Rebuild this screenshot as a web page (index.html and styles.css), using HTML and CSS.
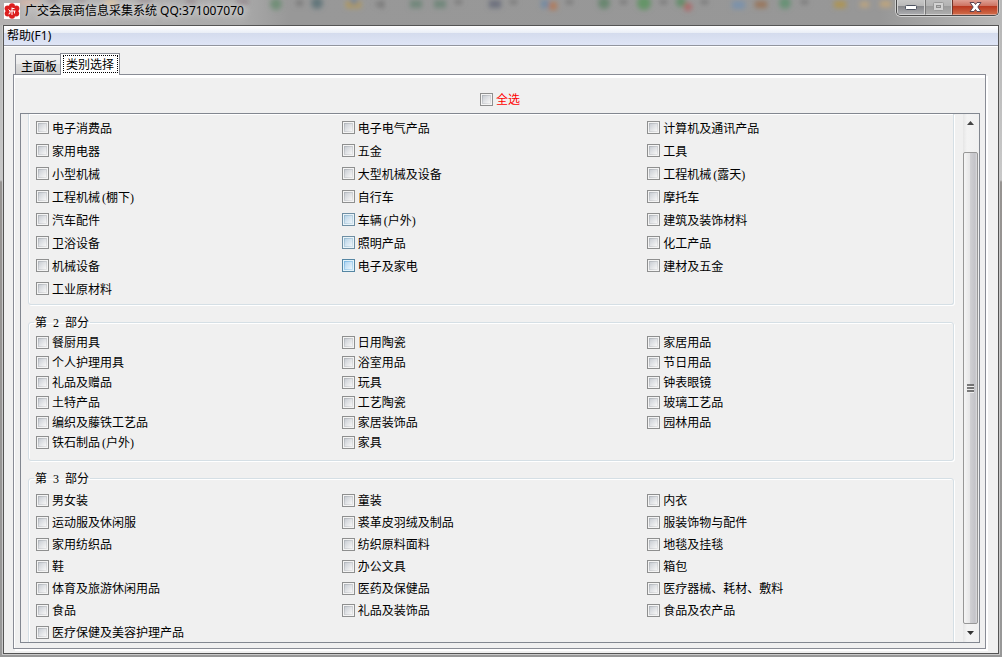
FILE: index.html
```html
<!DOCTYPE html>
<html lang="zh-CN">
<head>
<meta charset="utf-8">
<title>广交会展商信息采集系统</title>
<link rel="stylesheet" href="styles.css">
</head>
<body>
<div class="window">
  <header class="titlebar">
    <svg class="backdrop" width="1002" height="24" viewBox="0 0 1002 24" aria-hidden="true">
      <defs><filter id="soft" x="-50%" y="-50%" width="200%" height="200%"><feGaussianBlur stdDeviation="2.600"/></filter></defs>
      <g filter="url(#soft)">
        <path fill="#d8b2a0" d="M20 0h20v5h-20zM105 0h12v6h-12z"/>
        <path fill="#dcc294" d="M106 0h10v5h-10z"/>
        <path fill="#8a7a80" d="M48 0h10v3h-10zM76 0h9v3h-9zM138 0h14v3h-14zM186 0h10v4h-10zM236 0h12v4h-12z"/>
        <circle cx="276" cy="4" r="6" fill="#728f78"/><circle cx="317" cy="3" r="6" fill="#64777c"/>
        <path fill="#7d7d7d" d="M296 0h7v6h-7z"/>
        <path fill="#b29a5c" d="M346 1h15v7h-15z"/><circle cx="354" cy="1" r="4" fill="#7a8793"/>
        <path fill="#777" d="M374 4l10-4v9zM455 0h7v4h-7zM510 0h7v4h-7zM566 0h7v4h-7zM620 0h7v4h-7zM660 0h7v4h-7zM701 0h7v4h-7zM801 0h7v4h-7z"/>
        <path fill="#71877a" d="M410 0h12v8h-12zM434 0h12v8h-12z"/>
        <path fill="#6d717e" d="M489 0h12v8h-12z"/>
        <path fill="#748ba3" d="M541 0h8v8h-8z"/><path fill="#b07d5d" d="M549 2h8v8h-8z"/>
        <circle cx="604" cy="3" r="6" fill="#69866f"/><circle cx="644" cy="3" r="7" fill="#659467"/>
        <circle cx="681" cy="2" r="5" fill="#638e6b"/><circle cx="688" cy="7" r="4" fill="#ad6969"/>
        <path fill="#7c92aa" d="M732 1h13v8h-13z"/><path fill="#99765c" d="M755 1h12v7h-12z"/>
        <circle cx="785" cy="3" r="6" fill="#699276"/><path fill="#ad9454" d="M834 1h12v7h-12z"/>
        <path fill="#c0a57d" d="M860 2h9v5h-9zM880 1h11v6h-11z"/>
      </g>
    </svg>
    <svg class="logo" width="16" height="16" viewBox="0 0 16 16" aria-hidden="true">
      <rect width="16" height="16" fill="#fff"/>
      <g fill="#dc1f1f"><circle cx="8" cy="3.3" r="3"/><circle cx="12.4" cy="5.5" r="3"/><circle cx="12.2" cy="10.6" r="3"/><circle cx="8" cy="12.7" r="3"/><circle cx="3.7" cy="10.5" r="3"/><circle cx="3.6" cy="5.5" r="3"/><circle cx="8" cy="8" r="4"/></g>
      <path d="M8 12V4.500M8 5.500h2.500M4.500 6.500L6 8h5.500M6 8v2.500L4.500 11M10.500 8v2.500" fill="none" stroke="#fff"/>
    </svg>
    <h1 class="caption">广交会展商信息采集系统 QQ:371007070</h1>
    <div class="controls">
      <button class="control" aria-label="最小化"><svg width="13" height="7" viewBox="0 0 13 7"><rect x=".5" y="1.5" width="11" height="4" rx="1" fill="#fff" stroke="#4c5261"/></svg></button>
      <button class="control control-max" aria-label="最大化" disabled><svg width="13" height="10" viewBox="0 0 13 10"><rect x="1.500" y=".5" width="10" height="8" rx="1" fill="#d2d2d2" stroke="#999"/><rect x="4.500" y="3.500" width="4" height="2" fill="#bbb" stroke="#8c8c8c"/></svg></button>
      <button class="control control-close" aria-label="关闭"><svg width="13" height="11" viewBox="0 0 13 11"><path d="M1 .5h4l1.500 2L8 .5h4L8.800 5 12 9.500H8L6.500 7.500 5 9.500H1L4.200 5z" fill="#fff" stroke="#5b4350"/></svg></button>
    </div>
  </header>
  <main class="client">
    <nav class="menubar"><button class="menu">帮助(F1)</button></nav>
    <div class="workspace">
      <div class="tabs" role="tablist">
        <button class="tab" role="tab" aria-selected="false">主面板</button>
        <button class="tab tab-active" role="tab" aria-selected="true"><span class="focus">类别选择</span></button>
      </div>
      <section class="panel" role="tabpanel">
        <div class="all"><label class="option option-all"><input type="checkbox">全选</label></div>
        <div class="viewport">
          <div class="groups">
            <fieldset class="group group-one">
              <label class="option"><input type="checkbox">电子消费品</label>
              <label class="option"><input type="checkbox">电子电气产品</label>
              <label class="option"><input type="checkbox">计算机及通讯产品</label>
              <label class="option"><input type="checkbox">家用电器</label>
              <label class="option"><input type="checkbox">五金</label>
              <label class="option"><input type="checkbox">工具</label>
              <label class="option"><input type="checkbox">小型机械</label>
              <label class="option"><input type="checkbox">大型机械及设备</label>
              <label class="option"><input type="checkbox"><span>工程机械<span class="open">(</span>露天<span class="close">)</span></span></label>
              <label class="option"><input type="checkbox"><span>工程机械<span class="open">(</span>棚下<span class="close">)</span></span></label>
              <label class="option"><input type="checkbox">自行车</label>
              <label class="option"><input type="checkbox">摩托车</label>
              <label class="option"><input type="checkbox">汽车配件</label>
              <label class="option"><input type="checkbox" class="warm"><span>车辆<span class="open">(</span>户外<span class="close">)</span></span></label>
              <label class="option"><input type="checkbox">建筑及装饰材料</label>
              <label class="option"><input type="checkbox">卫浴设备</label>
              <label class="option"><input type="checkbox" class="warm">照明产品</label>
              <label class="option"><input type="checkbox">化工产品</label>
              <label class="option"><input type="checkbox">机械设备</label>
              <label class="option"><input type="checkbox" class="hot">电子及家电</label>
              <label class="option"><input type="checkbox">建材及五金</label>
              <label class="option"><input type="checkbox">工业原材料</label>
            </fieldset>
            <fieldset class="group group-two">
              <legend>第<span class="number">2</span>部分</legend>
              <label class="option"><input type="checkbox">餐厨用具</label>
              <label class="option"><input type="checkbox">日用陶瓷</label>
              <label class="option"><input type="checkbox">家居用品</label>
              <label class="option"><input type="checkbox">个人护理用具</label>
              <label class="option"><input type="checkbox">浴室用品</label>
              <label class="option"><input type="checkbox">节日用品</label>
              <label class="option"><input type="checkbox">礼品及赠品</label>
              <label class="option"><input type="checkbox">玩具</label>
              <label class="option"><input type="checkbox">钟表眼镜</label>
              <label class="option"><input type="checkbox">土特产品</label>
              <label class="option"><input type="checkbox">工艺陶瓷</label>
              <label class="option"><input type="checkbox">玻璃工艺品</label>
              <label class="option"><input type="checkbox">编织及藤铁工艺品</label>
              <label class="option"><input type="checkbox">家居装饰品</label>
              <label class="option"><input type="checkbox">园林用品</label>
              <label class="option"><input type="checkbox"><span>铁石制品<span class="open">(</span>户外<span class="close">)</span></span></label>
              <label class="option"><input type="checkbox">家具</label>
            </fieldset>
            <fieldset class="group group-three">
              <legend>第<span class="number">3</span>部分</legend>
              <label class="option"><input type="checkbox">男女装</label>
              <label class="option"><input type="checkbox">童装</label>
              <label class="option"><input type="checkbox">内衣</label>
              <label class="option"><input type="checkbox">运动服及休闲服</label>
              <label class="option"><input type="checkbox">裘革皮羽绒及制品</label>
              <label class="option"><input type="checkbox">服装饰物与配件</label>
              <label class="option"><input type="checkbox">家用纺织品</label>
              <label class="option"><input type="checkbox">纺织原料面料</label>
              <label class="option"><input type="checkbox">地毯及挂毯</label>
              <label class="option"><input type="checkbox">鞋</label>
              <label class="option"><input type="checkbox">办公文具</label>
              <label class="option"><input type="checkbox">箱包</label>
              <label class="option"><input type="checkbox">体育及旅游休闲用品</label>
              <label class="option"><input type="checkbox">医药及保健品</label>
              <label class="option"><input type="checkbox">医疗器械、耗材、敷料</label>
              <label class="option"><input type="checkbox">食品</label>
              <label class="option"><input type="checkbox">礼品及装饰品</label>
              <label class="option"><input type="checkbox">食品及农产品</label>
              <label class="option"><input type="checkbox">医疗保健及美容护理产品</label>
            </fieldset>
          </div>
          <div class="scrollbar">
            <button class="arrow" aria-label="向上滚动"><svg width="7" height="4" viewBox="0 0 7 4"><path d="M0 4L3.500 0 7 4z" fill="#444"/></svg></button>
            <div class="track"><div class="thumb"><svg width="7" height="9" viewBox="0 0 7 9"><path d="M0 1h7M0 4h7M0 7h7" stroke="#555" stroke-width="1.400"/><path d="M0 2.500h7M0 5.500h7M0 8.500h7" stroke="#eee"/></svg></div></div>
            <button class="arrow" aria-label="向下滚动"><svg width="7" height="4" viewBox="0 0 7 4"><path d="M0 0h7L3.500 4z" fill="#333"/></svg></button>
          </div>
        </div>
      </section>
    </div>
  </main>
</div>
</body>
</html>
```
FILE: styles.css
```css
* { box-sizing: border-box; }

body {
  margin: 0;
  font: 12px/16px "Noto Sans CJK SC", sans-serif;
  color: #000;
}

button {
  margin: 0;
  padding: 0;
  border: 0;
  background: none;
  font: inherit;
  color: inherit;
}

svg { display: block; }

/* window frame */
.window {
  display: flex;
  flex-direction: column;
  height: 100vh;
  padding: 0 3px 3px;
  overflow: hidden;
  background: linear-gradient(#b5b5b5 0, #c8c8c8 180px, #969391 182px, #989898 100%);
}

.titlebar {
  position: relative;
  display: flex;
  flex: none;
  align-items: flex-start;
  gap: 5px;
  height: 25px;
  margin: 0 -3px;
  padding-left: 4px;
  overflow: hidden;
  background: linear-gradient(90deg, #b4b2b2 0, #aaa 240px, #989898 290px, #979797 880px, #b8b8b8 100%);
}

.backdrop { position: absolute; top: 0; left: 0; }
.logo { position: relative; margin-top: 3px; }

.caption {
  position: relative;
  flex: 1;
  margin: 3px 0 0;
  font: 12px/16px "Noto Sans", "Noto Sans CJK SC", sans-serif;
  text-shadow: 0 0 6px #ddd, 0 0 8px #ddd, 0 0 10px #ccc;
}

.controls {
  position: relative;
  display: flex;
  height: 16px;
  margin-right: 3px;
  border: 1px solid #4a4a4a;
  border-top: 0;
  border-radius: 0 0 5px 5px;
  box-shadow: 0 0 0 1px #d0d0d0;
  overflow: hidden;
}

.control {
  display: flex;
  align-items: center;
  justify-content: center;
  width: 28px;
  padding-top: 1px;
  border: 1px solid #d3d3d3;
  border-top: 0;
  background: linear-gradient(#c6c6c6 0, #b9b9b9 40%, #85868a 45%, #aaabae 100%);
}

.control-max {
  width: 27px;
  padding-top: 0;
  border-left-color: #777;
  background: linear-gradient(#bcbcbc 0, #b3b3b3 40%, #9b9b9b 45%, #adadad 100%);
}

.control-close {
  width: 46px;
  padding-top: 0;
  border-color: #e0a090;
  border-left-color: #713328;
  background: linear-gradient(#dfa094 0, #ce7564 40%, #b93820 45%, #cf6946 100%);
}

.client {
  display: flex;
  flex: 1;
  flex-direction: column;
  min-height: 0;
  border: 1px solid #545454;
  box-shadow: 0 0 0 1px #c9c9c9;
  background: #f0f0f0;
}

.menubar {
  display: flex;
  flex: none;
  height: 21px;
  border-bottom: 1px solid #fff;
  background: linear-gradient(#fff 0, #e9edf6 7px, #d4dbed 7px, #dfe5f6 19px, #92959e 19px);
}

.menu {
  padding: 0 3px 1px;
  font-family: "Noto Sans", "Noto Sans CJK SC", sans-serif;
}

.workspace {
  display: flex;
  flex: 1;
  flex-direction: column;
  min-height: 0;
  padding: 6px 12px 4px 9px;
}

/* tabs */
.tabs {
  position: relative;
  display: flex;
  flex: none;
  align-items: flex-end;
  height: 22px;
  margin-bottom: -1px;
  padding-left: 2px;
}

.tab {
  height: 20px;
  margin-bottom: 1px;
  padding: 2px 3px 0 5px;
  border: 1px solid #898c95;
  border-right: 0;
  border-bottom: 0;
  background: linear-gradient(#f3f3f3 0, #ececec 45%, #dedede 50%, #d0d0d0 100%);
  line-height: 17px;
}

.tab-active {
  height: 22px;
  margin-bottom: 0;
  padding: 1px 1px 2px 2px;
  border-right: 1px solid #898c95;
  background: #fff;
}

.focus {
  display: block;
  padding: 0 3px 1px 2px;
  border: 1px dotted #000;
  line-height: 15px;
}

.panel {
  display: flex;
  flex: 1;
  flex-direction: column;
  min-height: 0;
  padding: 15px 5px 5px 6px;
  border: 1px solid #898c95;
  box-shadow: inset 0 3px #fff, inset 1px 0 #fff, 2px 2px #fff;
}

.all {
  display: flex;
  flex: none;
  justify-content: center;
  height: 23px;
}

/* category list */
.viewport {
  display: flex;
  flex: 1;
  min-height: 0;
  border: 1px solid #828790;
  overflow: hidden;
}

.groups {
  flex: 1;
  min-width: 0;
  padding: 0 9px 0 7px;
}

.group {
  display: grid;
  grid-template-columns: repeat(3, 1fr);
  min-width: 0;
  margin: 0 0 9px;
  padding: 0 0 0 7px;
  border: 1px solid #d5dfe5;
  border-radius: 3px;
  box-shadow: inset 1px 1px #fff, 1px 1px #fff;
}

.group-one {
  grid-auto-rows: 23px;
  padding-top: 2px;
  padding-bottom: 4px;
  border-top: 0;
  border-radius: 0 0 3px 3px;
}

.group-two { grid-auto-rows: 20px; padding-top: 2px; padding-bottom: 8px; }
.group-three { grid-auto-rows: 22px; padding-top: 3px; padding-bottom: 6px; }

legend {
  margin-left: -2px;
  padding: 0 1px;
  line-height: 16px;
}

.open, .close, .number { font: 12px/12px "Liberation Serif", serif; }
.open { margin-left: 2px; }
.close { margin-right: 2px; }
.number { margin: 0 6px; }

.option {
  display: flex;
  align-items: center;
  gap: 3px;
  white-space: nowrap;
}

.option-all { height: 18px; color: #f00; }

input[type="checkbox"] {
  appearance: none;
  flex: none;
  width: 13px;
  height: 13px;
  margin: 0;
  border: 1px solid #8e8f8f;
  background:
    linear-gradient(135deg, #cbcfd5, #f6f6f6) center / 7px 7px no-repeat,
    linear-gradient(135deg, #aeb3b9, #e9e9ea) center / 9px 9px no-repeat,
    #f4f4f4;
}

input[type="checkbox"].warm {
  border-color: #6e8ea3;
  background:
    linear-gradient(135deg, #bbd5e8, #eef5fa) center / 7px 7px no-repeat,
    linear-gradient(135deg, #93b8d0, #d8e8f2) center / 9px 9px no-repeat,
    #eaf4f9;
}

input[type="checkbox"].hot {
  border-color: #5586a3;
  background:
    linear-gradient(135deg, #b1d5f0, #e9f5fc) center / 7px 7px no-repeat,
    linear-gradient(135deg, #79b6e3, #c6e3f5) center / 9px 9px no-repeat,
    #e3f3fa;
}

/* scrollbar */
.scrollbar {
  display: flex;
  flex: none;
  flex-direction: column;
  width: 16px;
  padding-right: 1px;
  background: linear-gradient(90deg, #e6e6e6, #f3f3f3 4px, #f0f0f0);
}

.arrow {
  display: flex;
  flex: none;
  align-items: center;
  justify-content: center;
  height: 18px;
}

.track {
  display: flex;
  flex: 1;
  padding-top: 20px;
}

.thumb {
  display: flex;
  flex: 1;
  align-items: center;
  justify-content: center;
  border: 1px solid #979797;
  border-radius: 2px;
  background: linear-gradient(90deg, #f5f5f5 0, #e6e6e7 45%, #cfcfd2 50%, #c3c3c8 85%, #dcdcde 100%);
}
```
